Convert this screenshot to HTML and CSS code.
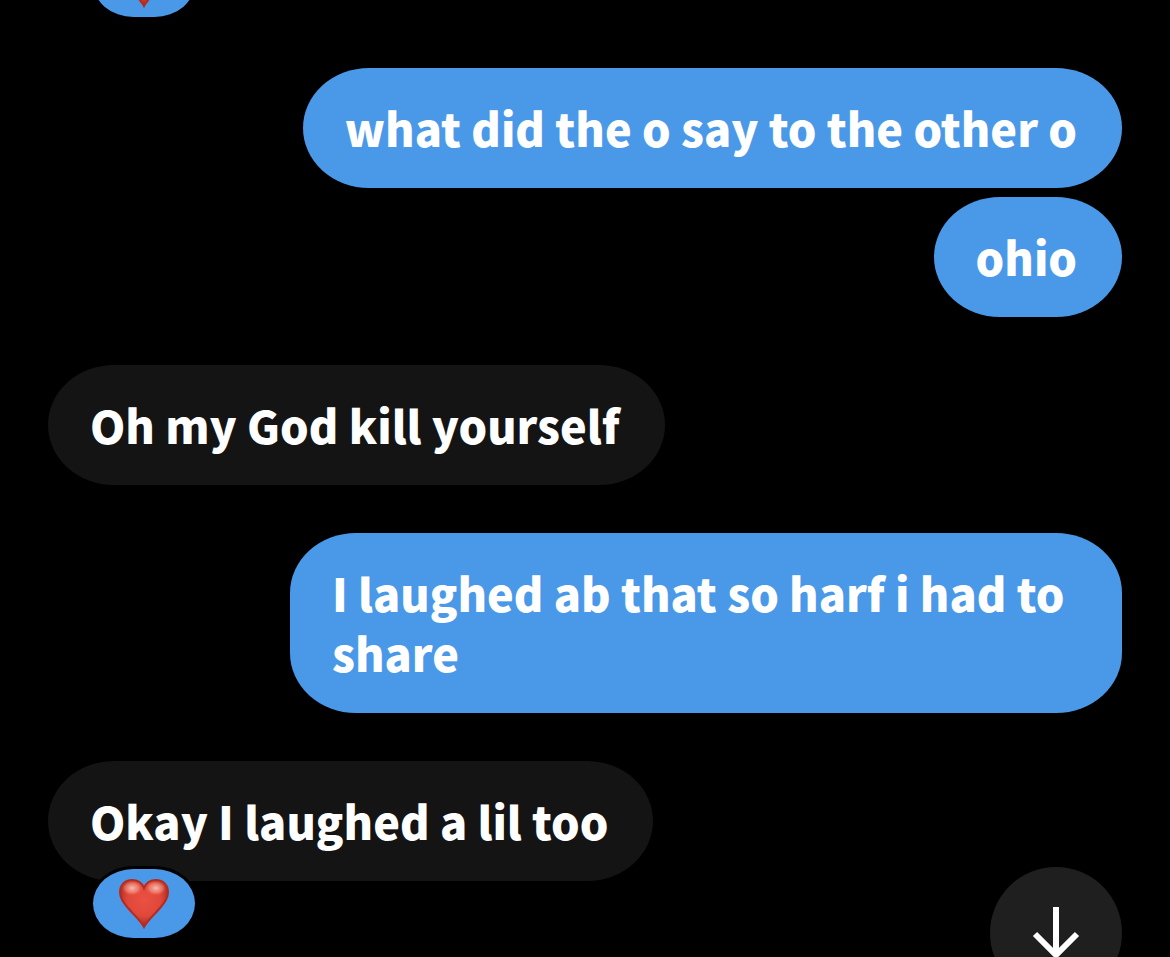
FILE: index.html
```html
<!DOCTYPE html>
<html lang="en">
    <head>
        <meta charset="UTF-8">
        <meta name="viewport" content="width=device-width, initial-scale=1">
        <title>Messages</title>
        <link rel="stylesheet" href="styles.css">
    </head>
    <body>
    <!-- heart shared by the reactions -->
    <svg class="defs" width="0" height="0" aria-hidden="true">
        <defs>
            <radialGradient id="heart-fill" cx="50%" cy="42%" r="58%">
                <stop offset="0" stop-color="#ec5142"/>
                <stop offset="0.6" stop-color="#de483a"/>
                <stop offset="1" stop-color="#a9261a"/>
            </radialGradient>
            <radialGradient id="heart-shine">
                <stop offset="0" stop-color="#ffd9cf" stop-opacity="0.8"/>
                <stop offset="0.6" stop-color="#f9a596" stop-opacity="0.5"/>
                <stop offset="1" stop-color="#f0503f" stop-opacity="0"/>
            </radialGradient>
        </defs>
        <symbol id="heart" viewBox="0 0 50 50">
            <path d="M25 48C22 42 15 36 9 29C4 23 1 19 1 13C1 6 6 1 13 1C19 1 23 4 25 9C27 4 31 1 37 1C44 1 49 6 49 13C49 19 46 23 41 29C35 36 28 42 25 48Z" fill="url(#heart-fill)" stroke="#b52a1d" stroke-width="2"/>
            <ellipse cx="13" cy="9" rx="11" ry="8" fill="url(#heart-shine)"/>
            <ellipse cx="37" cy="9" rx="11" ry="8" fill="url(#heart-shine)"/>
        </symbol>
    </svg>
    <main class="chat">
        <div class="cut">
            <span class="reaction"><svg class="heart" role="img" aria-label="Heart"><use href="#heart"/></svg></span>
        </div>
        <div class="msg out">
            <p class="bubble">what did the o say to the other o</p>
        </div>
        <div class="msg out joined">
            <p class="bubble">ohio</p>
        </div>
        <div class="msg">
            <p class="bubble">Oh my God kill yourself</p>
        </div>
        <div class="msg out">
            <p class="bubble">I laughed ab that so harf i had to share</p>
        </div>
        <div class="msg">
            <p class="bubble">Okay I laughed a lil too</p>
            <span class="reaction"><svg class="heart" role="img" aria-label="Heart"><use href="#heart"/></svg></span>
        </div>
    </main>
    <button class="down" type="button" aria-label="Scroll to bottom">
        <svg class="arrow" viewBox="0 0 60 60" aria-hidden="true">
            <path d="M30 4V52M9 31L30 52L51 31"/>
        </svg>
    </button>
    </body>
</html>
```
FILE: styles.css
```css
*{
    margin:0;
    padding:0;
    box-sizing:border-box;
}
body{
    background:#000;
    color:#fff;
    font-family:"Noto Sans CJK JP", "Noto Sans", sans-serif;
    font-size:45px;
    font-weight:900;
    line-height:60px;
}
.defs{
    position:absolute;
}
.chat{
    height:100vh;
    overflow:hidden;
    padding:0 48px;
}
.cut{
    display:flex;
    align-items:flex-end;
    height:20px;
    margin-left:42px;
}
.msg{
    display:flex;
    position:relative;
    margin-top:48px;
}
.msg.out{
    justify-content:flex-end;
}
.msg.joined{
    margin-top:9px;
}
.bubble{
    max-width:calc(100% - 242px);
    padding:30px 45px 30px 42px;
    border-radius:66px / 60px;
    background:#141414;
}
.out .bubble{
    background:#4a99e9;
}
.reaction{
    display:flex;
    flex:none;
    align-items:center;
    justify-content:center;
    width:108px;
    height:75px;
    border:3px solid #000;
    border-radius:44px / 38px;
    background:#4a99e9;
}
.msg .reaction{
    position:absolute;
    left:42px;
    bottom:-60px;
}
.heart{
    width:50px;
    height:50px;
}
.down{
    display:flex;
    align-items:center;
    justify-content:center;
    position:fixed;
    right:48px;
    bottom:-42px;
    width:132px;
    height:132px;
    border:0;
    border-radius:50%;
    background:#1f1f1f;
}
.arrow{
    width:60px;
    height:60px;
    fill:none;
    stroke:#fff;
    stroke-width:6;
}
```
